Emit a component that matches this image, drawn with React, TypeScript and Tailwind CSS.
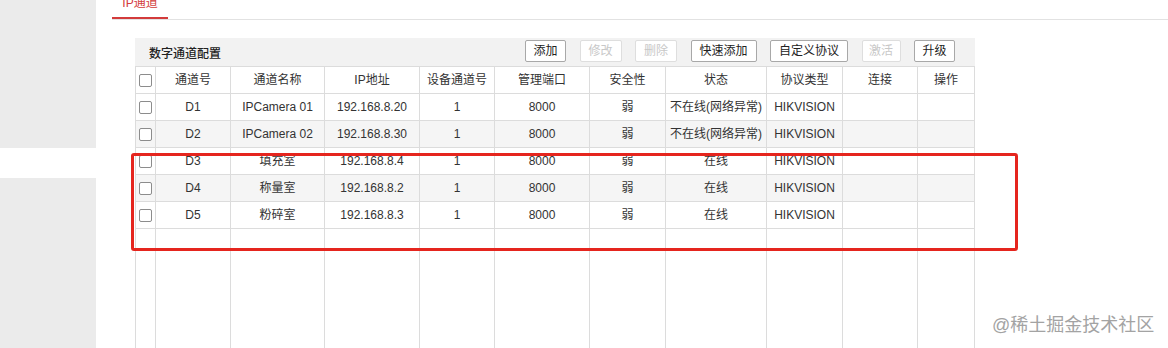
import React from "react";

type Channel = {
  id: string;
  name: string;
  ip: string;
  devCh: string;
  port: string;
  security: string;
  status: string;
  protocol: string;
};

const columns = [
  { key: "id", label: "通道号", w: "w-[75px]" },
  { key: "name", label: "通道名称", w: "w-[94px]" },
  { key: "ip", label: "IP地址", w: "w-[95px]" },
  { key: "devCh", label: "设备通道号", w: "w-[75px]" },
  { key: "port", label: "管理端口", w: "w-[95px]" },
  { key: "security", label: "安全性", w: "w-[76px]" },
  { key: "status", label: "状态", w: "w-[101px]" },
  { key: "protocol", label: "协议类型", w: "w-[76px]" },
  { key: "link", label: "连接", w: "w-[75px]" },
  { key: "op", label: "操作", w: "w-[57px]" },
] as const;

const channels: Channel[] = [
  { id: "D1", name: "IPCamera 01", ip: "192.168.8.20", devCh: "1", port: "8000", security: "弱", status: "不在线(网络异常)", protocol: "HIKVISION" },
  { id: "D2", name: "IPCamera 02", ip: "192.168.8.30", devCh: "1", port: "8000", security: "弱", status: "不在线(网络异常)", protocol: "HIKVISION" },
  { id: "D3", name: "填充室", ip: "192.168.8.4", devCh: "1", port: "8000", security: "弱", status: "在线", protocol: "HIKVISION" },
  { id: "D4", name: "称量室", ip: "192.168.8.2", devCh: "1", port: "8000", security: "弱", status: "在线", protocol: "HIKVISION" },
  { id: "D5", name: "粉碎室", ip: "192.168.8.3", devCh: "1", port: "8000", security: "弱", status: "在线", protocol: "HIKVISION" },
];

const buttons = [
  { label: "添加", w: "w-[41px]", disabled: false },
  { label: "修改", w: "w-[42px]", disabled: true },
  { label: "删除", w: "w-[42px]", disabled: true },
  { label: "快速添加", w: "w-[66px]", disabled: false },
  { label: "自定义协议", w: "w-[78px]", disabled: false },
  { label: "激活", w: "w-[39px]", disabled: true },
  { label: "升级", w: "w-[41px]", disabled: false },
];

function Checkbox() {
  return <span className="block h-[13px] w-[13px] rounded-[2px] border border-[#8c8c8c] bg-white" />;
}

function Cell({ w, children }: { w: string; children?: React.ReactNode }) {
  return (
    <div className={`${w} flex shrink-0 items-center justify-center border-r border-[#dcdcdc] whitespace-nowrap`}>
      {children}
    </div>
  );
}

export default function App() {
  return (
    <div className="flex h-[348px] w-[1168px] overflow-hidden bg-white font-['Liberation_Sans','Noto_Sans_CJK_SC',sans-serif] text-[12px] text-[#333]">
      {/* left menu */}
      <aside className="flex w-[96px] shrink-0 flex-col">
        <div className="h-[148px] bg-[#ebebeb]" />
        <div className="h-[30px]" />
        <div className="flex-1 bg-[#ebebeb]" />
      </aside>

      <main className="relative flex-1 pl-[16px]">
        {/* tabs */}
        <div className="flex h-[20px] border-b border-[#e2e2e2]">
          <div className="flex h-[19px] w-[56px] justify-center overflow-hidden border-b-2 border-[#d33b3b]">
            <span className="-mt-[3px] leading-[12px] text-[#d33b3b]">IP通道</span>
          </div>
        </div>

        {/* channel panel */}
        <section className="ml-[23px] mt-[18px] w-[840px]">
          <div className="flex h-[28px] items-start justify-between bg-[#f2f2f2] pl-[14px] pr-[20px]">
            <span className="mt-[7px] font-medium text-[#222]">数字通道配置</span>
            <div className="mt-[2px] flex gap-[13.5px]">
              {buttons.map((b) => (
                <button
                  key={b.label}
                  className={`${b.w} h-[22px] rounded-[2px] border bg-white text-[12px] ${
                    b.disabled ? "border-[#dedede] text-[#c8c8c8]" : "border-[#a8a8a8] text-[#222]"
                  }`}
                >
                  {b.label}
                </button>
              ))}
            </div>
          </div>

          <div className="border-l border-t border-[#dcdcdc]">
            <div className="flex h-[27px] border-b border-[#dcdcdc] bg-white">
              <Cell w="w-[20px]">
                <Checkbox />
              </Cell>
              {columns.map((c) => (
                <Cell key={c.key} w={c.w}>
                  {c.label}
                </Cell>
              ))}
            </div>

            {channels.map((ch, i) => (
              <div
                key={ch.id}
                className={`flex h-[27px] border-b border-[#dcdcdc] ${i % 2 === 1 ? "bg-[#f5f5f5]" : "bg-white"}`}
              >
                <Cell w="w-[20px]">
                  <Checkbox />
                </Cell>
                {columns.map((c) => (
                  <Cell key={c.key} w={c.w}>
                    {c.key in ch ? ch[c.key as keyof Channel] : ""}
                  </Cell>
                ))}
              </div>
            ))}

            <div className="flex h-[140px]">
              <Cell w="w-[20px]" />
              {columns.map((c) => (
                <Cell key={c.key} w={c.w} />
              ))}
            </div>
          </div>
        </section>

        {/* annotation box */}
        <div className="pointer-events-none absolute left-[35px] top-[153px] h-[98px] w-[887px] rounded-[3px] border-[3px] border-[#e5251e]" />

        <span className="absolute left-[896px] top-[312px] text-[18px] text-[#a3a3a3]">@稀土掘金技术社区</span>
      </main>
    </div>
  );
}
